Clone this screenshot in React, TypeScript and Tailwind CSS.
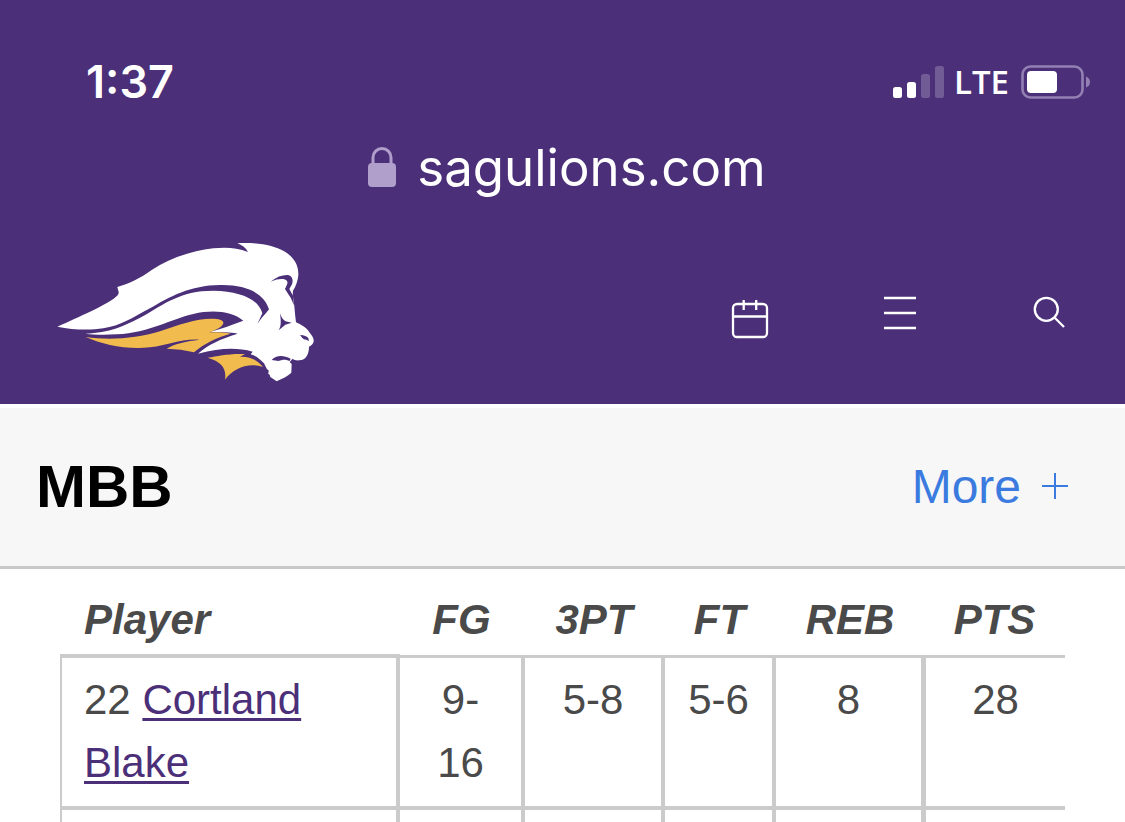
import React from "react";

const columns = ["FG", "3PT", "FT", "REB", "PTS"];

const players = [
  { number: 22, name: "Cortland Blake", stats: ["9-16", "5-8", "5-6", "8", "28"] },
];

const LionLogo = () => (
  <svg viewBox="0 0 870 492" className="w-[290px] h-[164px]" aria-hidden="true">
    {/* head and mane */}
    <path
      fill="#fff"
      d="M52 290C120 260 190 228 220 207C232 198 237 192 236 186L232 171C270 160 300 145 335 120C390 84 450 64 520 55C560 51 590 53 624 66C616 52 606 45 592 40C650 36 700 46 735 65C762 83 776 105 775 134C774 152 766 172 759 182L758 196C764 222 764 250 768 277C790 286 803 298 808 307C816 317 822 324 821 334C820 342 814 347 807 350C807 372 798 390 778 391C768 392 762 389 758 386L749 396L755 402L754 428C742 440 728 445 710 454L691 441L689 434L685 432L686 421L681 418L672 400C660 388 650 378 632 373L638 365C590 352 540 354 474 371C505 343 540 328 593 311C570 306 540 306 508 306C540 298 578 284 610 272C575 244 520 238 460 252C390 268 330 308 230 313C190 315 160 314 136 311C210 308 250 290 310 258C370 224 420 182 520 182C600 184 655 206 667 250L652 282C660 268 675 254 687 238C672 190 620 163 540 165C450 166 390 200 330 235C280 262 240 288 190 295C150 301 100 300 52 290Z"
    />
    {/* gold mane */}
    <path
      fill="#f1bb4e"
      d="M137 321C210 332 290 325 360 304C420 283 480 262 530 267C545 269 555 275 548 284C540 295 523 301 507 307C530 306 550 306 572 311C530 322 492 341 462 367C435 360 410 357 380 356C405 340 440 334 478 329C420 326 385 346 330 352C260 359 190 345 137 321Z"
    />
    <path
      fill="#f1bb4e"
      d="M503 383C535 378 565 370 615 372L600 380C632 379 652 390 669 411C625 396 580 415 555 449C560 415 545 395 503 383Z"
    />
    {/* ear, eye, nose and mouth */}
    <g fill="#4b2f79">
      <path d="M692 155C710 140 728 134 744 135C757 138 761 150 756 163L748 177L759 197L762 226L752 203L735 177L742 161C746 148 725 141 692 155Z" />
      <path d="M720 250C724 263 729 269 737 274L755 278L736 284L716 301C723 289 724 277 720 250Z" />
      <path d="M780 315C793 316 800 318 805 325L807 333C797 327 795 331 787 324Z" />
      <path d="M695 390C707 376 728 373 752 386L749 393C733 386 725 390 716 393Z" />
    </g>
  </svg>
);

const StatusBar = () => (
  <div className="flex h-[52px] items-center justify-between pl-[86px] pr-[34px]">
    <span className="text-[45px] font-semibold leading-[52px]">1:37</span>
    <div className="flex items-center">
      <svg viewBox="0 0 51 32" className="h-8 w-[51px]" fill="#fff" aria-label="Signal">
        <rect x="0" y="21" width="9" height="11" rx="2.5" />
        <rect x="14" y="16" width="9" height="16" rx="2.5" />
        <rect x="28" y="8" width="9" height="24" rx="2.5" opacity=".22" />
        <rect x="42" y="0" width="9" height="32" rx="2.5" opacity=".22" />
      </svg>
      <span className="ml-[10px] font-['Open_Sans',sans-serif] text-[33px] font-semibold leading-[52px]">LTE</span>
      <svg viewBox="0 0 70 34" className="ml-3 h-[34px] w-[70px]" aria-label="Battery">
        <rect x="1.5" y="1.5" width="60" height="31" rx="8" fill="none" stroke="#9380b3" strokeWidth="2.6" />
        <rect x="6" y="6" width="30" height="22" rx="4" fill="#fff" />
        <path d="M65 11.5Q69 13 69 17T65 22.5Z" fill="#9380b3" />
      </svg>
    </div>
  </div>
);

const AddressBar = () => (
  <div className="mt-7 flex h-16 items-center justify-center gap-5 pl-2">
    <svg viewBox="0 0 30 42" className="h-[42px] w-[30px]" aria-hidden="true">
      <path d="M6 20V10.500a9 9 0 0 1 18 0V20" fill="none" stroke="#b09fcb" strokeWidth="3" />
      <rect x="1" y="16" width="28" height="24" rx="4" fill="#b09fcb" />
    </svg>
    <span className="text-[51px] leading-[64px]">sagulions.com</span>
  </div>
);

const iconClass = "h-[60px] w-[60px] fill-none stroke-white stroke-[2.3]";
const navButton = "flex w-[150px] items-center justify-center";

const SiteNav = () => (
  <nav className="mt-[30px] flex items-center justify-between pl-10">
    <a href="#" aria-label="Lions home">
      <LionLogo />
    </a>
    <div className="flex">
      <button type="button" aria-label="Schedule" className={navButton}>
        <svg viewBox="0 0 60 60" className={iconClass}>
          <rect x="13" y="22" width="34" height="33" rx="4" />
          <path d="M13 34.500H47M23.700 18V28M36.200 18V28" />
        </svg>
      </button>
      <button type="button" aria-label="Menu" className={navButton}>
        <svg viewBox="0 0 60 60" className={iconClass}>
          <path d="M14 16H46M14 31H46M14 46H46" />
        </svg>
      </button>
      <button type="button" aria-label="Search" className={navButton}>
        <svg viewBox="0 0 60 60" className={iconClass}>
          <circle cx="26.300" cy="27.300" r="11.500" />
          <path d="M34.500 35.500L44 45" />
        </svg>
      </button>
    </div>
  </nav>
);

const cellBorders = [
  "border-r-4",
  "border-r-4",
  "border-r-4",
  "border-r-5",
  "",
];

const StatsTable = () => (
  <div className="px-[60px] pt-[19px]">
    <table className="w-full table-fixed border-separate border-spacing-0 text-[42px] leading-[63px] text-[#4a4a4a]">
      <colgroup>
        <col className="w-[340px]" />
        <col className="w-[125px]" />
        <col className="w-[140px]" />
        <col className="w-[111px]" />
        <col className="w-[150px]" />
        <col />
      </colgroup>
      <thead>
        <tr className="italic">
          <th scope="col" className="border-b-4 border-[#cbcbcb] pb-[3px] pl-6 text-left font-bold">
            Player
          </th>
          {columns.map((label) => (
            <th key={label} scope="col" className="border-b-3 border-[#cbcbcb] pb-1 pr-0.5 text-center font-bold">
              {label}
            </th>
          ))}
        </tr>
      </thead>
      <tbody>
        {players.map((player) => (
          <tr key={player.number} className="align-top">
            <td className="border-b-4 border-l-2 border-r-4 border-[#cbcbcb] px-[22px] pb-3 pt-[10px]">
              {player.number}{" "}
              <a href="#" className="text-[#4b2f79] underline decoration-3 underline-offset-4">
                {player.name}
              </a>
            </td>
            {player.stats.map((value, i) => (
              <td
                key={columns[i]}
                className={`border-b-4 border-[#cbcbcb] px-[22px] pb-3 pt-[10px] text-center ${cellBorders[i]}`}
              >
                {value}
              </td>
            ))}
          </tr>
        ))}
        <tr className="h-3">
          <td className="border-l-2 border-r-4 border-[#cbcbcb] p-0" />
          {columns.map((label, i) => (
            <td key={label} className={`border-[#cbcbcb] p-0 ${cellBorders[i]}`} />
          ))}
        </tr>
      </tbody>
    </table>
  </div>
);

const App = () => {
  return (
    <div className="bg-white font-['Liberation_Sans',Arial,sans-serif]">
      <header className="bg-[#4b2f79] pb-[10px] pt-14 font-[Inter,sans-serif] text-white">
        <StatusBar />
        <AddressBar />
        <SiteNav />
      </header>

      <main>
        <div className="mt-1 flex h-[161px] items-center justify-between border-b-3 border-[#c8c8c8] bg-[#f7f7f7] pl-9 pr-14">
          <h1 className="text-[60px] font-bold leading-[72px] text-black">MBB</h1>
          <a href="#" className="flex items-center gap-5 text-[48px] leading-[72px] text-[#3b7be0]">
            More
            <svg viewBox="0 0 28 28" className="h-7 w-7 fill-none stroke-current stroke-2" aria-hidden="true">
              <path d="M14 0V26M1 13H27" />
            </svg>
          </a>
        </div>
        <StatsTable />
      </main>
    </div>
  );
};

export default App;
